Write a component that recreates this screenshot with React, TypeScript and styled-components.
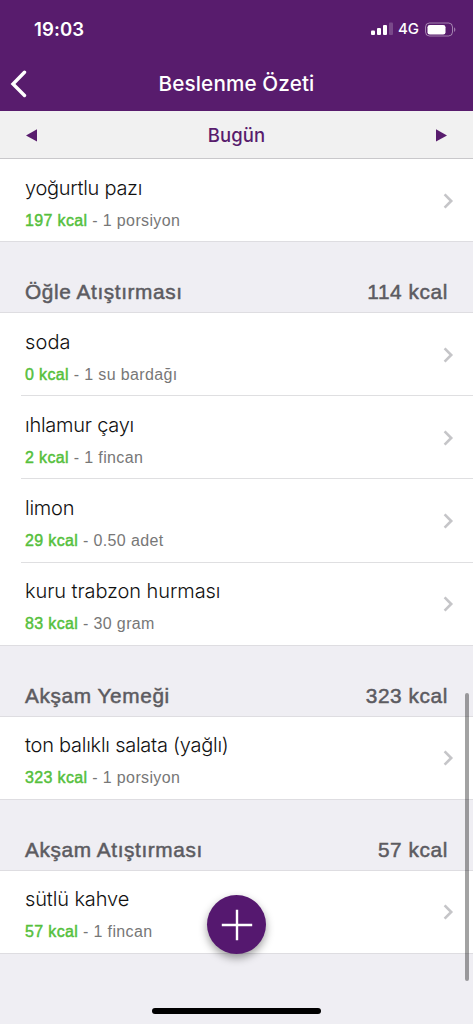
import React from "react";
import styled, { createGlobalStyle } from "styled-components";

const GlobalStyle = createGlobalStyle`
  * { box-sizing: border-box; }
  body { margin: 0; background: #efeef3; }
`;

const purple = "#581c6d";

const Screen = styled.div`
  position: relative;
  width: 473px;
  height: 1024px;
  overflow: hidden;
  display: flex;
  flex-direction: column;
  background: #efeef3;
  font-family: "Liberation Sans", Arial, sans-serif;
`;

const StatusBar = styled.div`
  height: 56px;
  padding: 2px 17px 0 34px;
  display: flex;
  align-items: center;
  justify-content: space-between;
  background: ${purple};
  color: #fff;
  font-family: Inter, sans-serif;
`;

const Clock = styled.span`
  font-size: 18.6px;
  font-weight: 560;
  letter-spacing: 0.1px;
`;

const StatusIcons = styled.div`
  display: flex;
  align-items: center;
`;

const Network = styled.span`
  margin: 0 6px 0 5px;
  width: 21px;
  font-size: 15px;
  font-weight: 500;
  letter-spacing: -0.2px;
  line-height: 20px;
`;

const NavBar = styled.header`
  height: 55px;
  display: grid;
  grid-template-columns: 60px 1fr 60px;
  align-items: center;
  background: ${purple};
`;

const BackButton = styled.button`
  padding: 0 0 0 10px;
  border: 0;
  background: none;
  display: flex;
`;

const Title = styled.h1`
  margin: 0;
  text-align: center;
  color: #fff;
  font: 550 20.7px/24px Inter, sans-serif;
  letter-spacing: 0.12px;
`;

const DateBar = styled.div`
  position: relative;
  z-index: 1;
  height: 48px;
  flex: none;
  padding: 1px 26px 0;
  display: flex;
  align-items: center;
  justify-content: space-between;
  background: #f1f1f1;
  border-bottom: 1px solid #c9c8cb;
`;

const DateLabel = styled.span`
  color: ${purple};
  font: 550 18.5px/24px Inter, sans-serif;
  letter-spacing: 0.1px;
`;

const List = styled.main`
  margin-top: -1px;
  display: flex;
  flex-direction: column;
`;

const SectionHeader = styled.h2`
  position: relative;
  margin: 0;
  height: 70.8px;
  padding: 37.8px 25px 0 25px;
  display: flex;
  justify-content: space-between;
  border-top: 1px solid #dedde1;
  box-shadow: 0 1px 0 #dedde1;
  color: #5c5b61;
  font-size: 20.8px;
  font-weight: 400;
  line-height: 24px;
  letter-spacing: 0.6px;
  -webkit-text-stroke: 0.5px #5c5b61;
`;

const Rows = styled.section`
  background: #fff;
  &:last-child { box-shadow: 0 1px 0 #dedde1; }
`;

const Row = styled.div<{ $divided: boolean }>`
  height: 83.2px;
  padding: 17.7px 19px 0 25px;
  display: flex;
  justify-content: space-between;
  background: linear-gradient(#dfdfe1, #dfdfe1) 21px 0 / ${(p) => (p.$divided ? "100%" : "0")} 1px no-repeat;
`;

const FoodName = styled.div<{ $spacing?: number }>`
  color: #111;
  font: 300 20px/24px Inter, sans-serif;
  letter-spacing: ${(p) => p.$spacing ?? -0.25}px;
  white-space: nowrap;
`;

const Detail = styled.div`
  margin-top: 11px;
  color: #777;
  font-size: 16px;
  line-height: 20px;
  letter-spacing: 0.36px;
`;

const Calories = styled.span`
  color: #55c03c;
  -webkit-text-stroke: 0.45px #55c03c;
`;

const Chevron = styled.svg`
  margin-top: 16px;
`;

const AddButton = styled.button`
  position: absolute;
  left: 207px;
  top: 895px;
  width: 59px;
  height: 59px;
  padding: 0;
  border: 0;
  border-radius: 50%;
  display: grid;
  place-items: center;
  background: #55186f;
  box-shadow: 0 4px 8px rgba(0, 0, 0, 0.38);
`;

const ScrollThumb = styled.div`
  position: absolute;
  right: 4px;
  top: 693px;
  width: 4px;
  height: 288px;
  border-radius: 2px;
  background: rgba(0, 0, 0, 0.36);
`;

const HomeIndicator = styled.div`
  position: absolute;
  left: 152px;
  bottom: 10px;
  width: 169px;
  height: 6px;
  border-radius: 3px;
  background: #000;
`;

type Food = { name: string; kcal: number; amount: string; spacing?: number };
type Meal = { title?: string; total?: number; foods: Food[] };

const meals: Meal[] = [
  { foods: [{ name: "yoğurtlu pazı", kcal: 197, amount: "1 porsiyon", spacing: -0.28 }] },
  {
    title: "Öğle Atıştırması",
    total: 114,
    foods: [
      { name: "soda", kcal: 0, amount: "1 su bardağı", spacing: 0.1 },
      { name: "ıhlamur çayı", kcal: 2, amount: "1 fincan" },
      { name: "limon", kcal: 29, amount: "0.50 adet" },
      { name: "kuru trabzon hurması", kcal: 83, amount: "30 gram", spacing: -0.08 },
    ],
  },
  {
    title: "Akşam Yemeği",
    total: 323,
    foods: [{ name: "ton balıklı salata (yağlı)", kcal: 323, amount: "1 porsiyon" }],
  },
  {
    title: "Akşam Atıştırması",
    total: 57,
    foods: [{ name: "sütlü kahve", kcal: 57, amount: "1 fincan", spacing: -0.12 }],
  },
];

function MealSection({ meal }: { meal: Meal }) {
  return (
    <>
      {meal.title && (
        <SectionHeader>
          <span>{meal.title}</span>
          <span>{meal.total} kcal</span>
        </SectionHeader>
      )}
      <Rows>
        {meal.foods.map((food, i) => (
          <Row key={food.name} $divided={i > 0}>
            <div>
              <FoodName $spacing={food.spacing}>{food.name}</FoodName>
              <Detail>
                <Calories>{food.kcal} kcal</Calories> - {food.amount}
              </Detail>
            </div>
            <Chevron width="12" height="18" viewBox="0 0 12 18" fill="none" stroke="#c5c5c8" strokeWidth="2.6">
              <path d="M2.6 2.4L9.2 9l-6.6 6.6" />
            </Chevron>
          </Row>
        ))}
      </Rows>
    </>
  );
}

export default function App() {
  return (
    <Screen>
      <GlobalStyle />
      <StatusBar>
        <Clock>19:03</Clock>
        <StatusIcons>
          <svg width="22" height="14" viewBox="0 0 22 14" fill="#fff">
            <rect x="0" y="8.5" width="4" height="4.5" rx="1" />
            <rect x="6" y="6" width="4" height="7" rx="1" />
            <rect x="12" y="3" width="4" height="10" rx="1" />
            <rect x="18" y="0.5" width="4" height="12.5" rx="1" opacity="0.2" />
          </svg>
          <Network>4G</Network>
          <svg width="31" height="15" viewBox="0 0 31 15" fill="none">
            <rect x="0.5" y="1" width="27" height="13" rx="4" stroke="#fff" strokeOpacity="0.45" />
            <rect x="2.5" y="3" width="18" height="9.5" rx="2.3" fill="#fff" />
            <path d="M29.2 5.2c1.5.7 1.5 4 0 4.7z" fill="#fff" fillOpacity="0.5" />
          </svg>
        </StatusIcons>
      </StatusBar>
      <NavBar>
        <BackButton aria-label="Geri">
          <svg width="18" height="28" viewBox="0 0 18 28" fill="none" stroke="#fff" strokeWidth="3.4" strokeLinecap="round">
            <path d="M14.5 2.3L3 14l11.5 11.5" />
          </svg>
        </BackButton>
        <Title>Beslenme Özeti</Title>
      </NavBar>
      <DateBar>
        <svg width="12" height="13" viewBox="0 0 12 13" fill={purple}>
          <path d="M11 0.3v12.2L0 6.4z" />
        </svg>
        <DateLabel>Bugün</DateLabel>
        <svg width="12" height="13" viewBox="0 0 12 13" fill={purple}>
          <path d="M1 0.3v12.2L12 6.4z" />
        </svg>
      </DateBar>
      <List>
        {meals.map((meal, i) => (
          <MealSection key={i} meal={meal} />
        ))}
      </List>
      <ScrollThumb />
      <AddButton aria-label="Ekle">
        <svg width="32" height="32" viewBox="0 0 32 32" stroke="#fff" strokeWidth="2.4">
          <path d="M16 0.8v30.4M0.8 16h30.4" />
        </svg>
      </AddButton>
      <HomeIndicator />
    </Screen>
  );
}
